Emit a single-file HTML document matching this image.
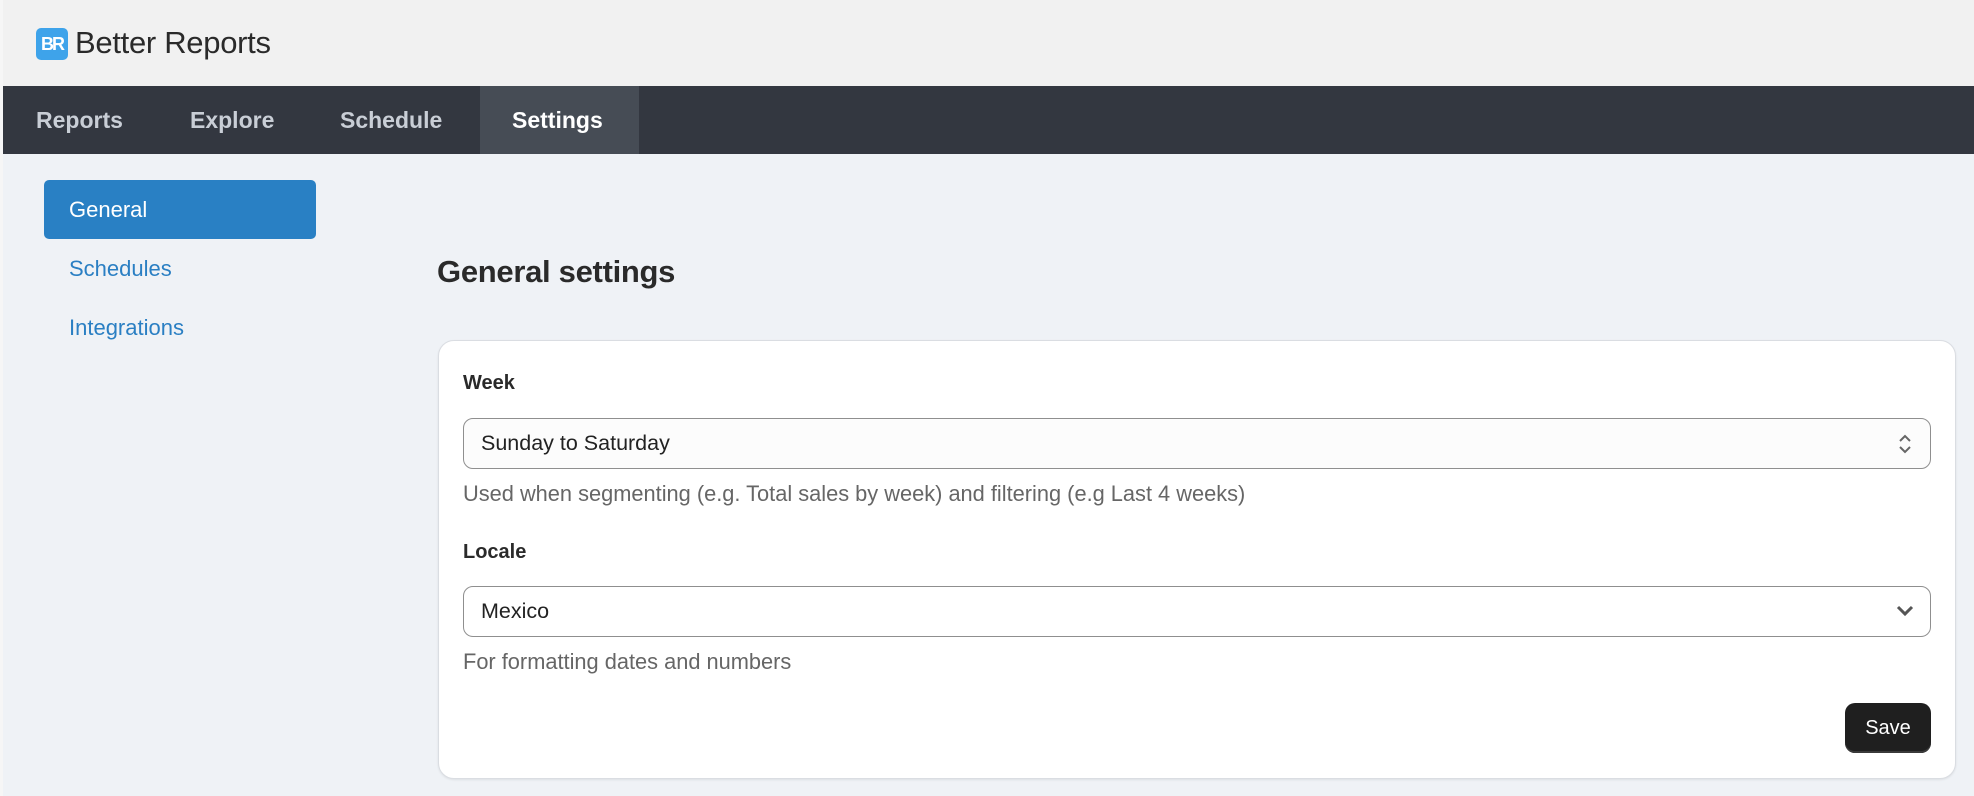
<!DOCTYPE html>
<html><head><style>
*{box-sizing:border-box;margin:0;padding:0}
body{width:1974px;height:796px;overflow:hidden;background:#eff2f6;font-family:"Liberation Sans",sans-serif;position:relative}
.hdr{position:absolute;left:0;top:0;width:1974px;height:86px;background:#f1f1f1}
.logo{position:absolute;left:36px;top:28px;width:32px;height:32px;background:#3ea3ea;border-radius:5px;color:#fff;font-weight:bold;font-size:18px;line-height:32px;text-align:center;letter-spacing:-2px}
.brand{position:absolute;left:75px;top:25px;font-size:31px;color:#2a2a2a;letter-spacing:-0.3px}
.nav{position:absolute;left:3px;top:86px;width:1971px;height:68px;background:#333740}
.nav span{position:absolute;top:0;line-height:68px;font-size:23px;font-weight:bold;color:#c9ced6}
.nav .act{background:#464c55;color:#fff}
.side{position:absolute;left:0;top:0;width:3px;height:796px;background:#f6f6f6}
.gen{position:absolute;left:44px;top:180px;width:272px;height:59px;background:#2980c4;border-radius:5px;color:#fff;font-size:22px;line-height:59px;padding-left:25px}
.lnk{position:absolute;left:69px;font-size:22px;color:#2a7fc3}
h1{position:absolute;left:437px;top:254px;font-size:31px;font-weight:bold;color:#2a2a2a;letter-spacing:-0.3px}
.card{position:absolute;left:438px;top:340px;width:1518px;height:439px;background:#fff;border:1px solid #dadde2;border-radius:16px;box-shadow:0 1px 2px rgba(0,0,0,.08)}
.lbl{position:absolute;left:463px;font-size:20px;font-weight:bold;color:#2a2a2a}
.sel{position:absolute;left:463px;width:1468px;height:51px;border:1px solid #8f8f8f;border-radius:10px;font-size:21.5px;color:#222;line-height:49px;padding-left:17px}
.help{position:absolute;left:463px;font-size:21.8px;color:#666}
.save{position:absolute;left:1845px;top:703px;width:86px;height:50px;background:#1f1f1f;border-radius:10px;color:#fff;font-size:20px;line-height:50px;text-align:center;box-shadow:inset 0 -2px 0 #3a3a3a}
</style></head><body>
<div class="hdr"><div class="logo">BR</div><div class="brand">Better Reports</div></div>
<div class="nav">
<span style="left:33px">Reports</span>
<span style="left:187px">Explore</span>
<span style="left:337px">Schedule</span>
<span class="act" style="left:477px;width:159px;padding-left:32px">Settings</span>
</div>
<div class="side"></div>
<div class="gen">General</div>
<div class="lnk" style="top:256px">Schedules</div>
<div class="lnk" style="top:315px">Integrations</div>
<h1>General settings</h1>
<div class="card"></div>
<div class="lbl" style="top:372px">Week</div>
<div class="sel" style="top:418px;background:#fcfcfc">Sunday to Saturday
<svg style="position:absolute;right:18px;top:15px" width="14" height="20" viewBox="0 0 14 20"><path d="M2 7 L7 2 L12 7 M2 13 L7 18 L12 13" fill="none" stroke="#666" stroke-width="2"/></svg></div>
<div class="help" style="top:481px">Used when segmenting (e.g. Total sales by week) and filtering (e.g Last 4 weeks)</div>
<div class="lbl" style="top:541px">Locale</div>
<div class="sel" style="top:586px">Mexico
<svg style="position:absolute;right:16px;top:18px" width="18" height="12" viewBox="0 0 18 12"><path d="M2 2 L9 9 L16 2" fill="none" stroke="#555" stroke-width="3"/></svg></div>
<div class="help" style="top:649px">For formatting dates and numbers</div>
<div class="save">Save</div>
</body></html>
